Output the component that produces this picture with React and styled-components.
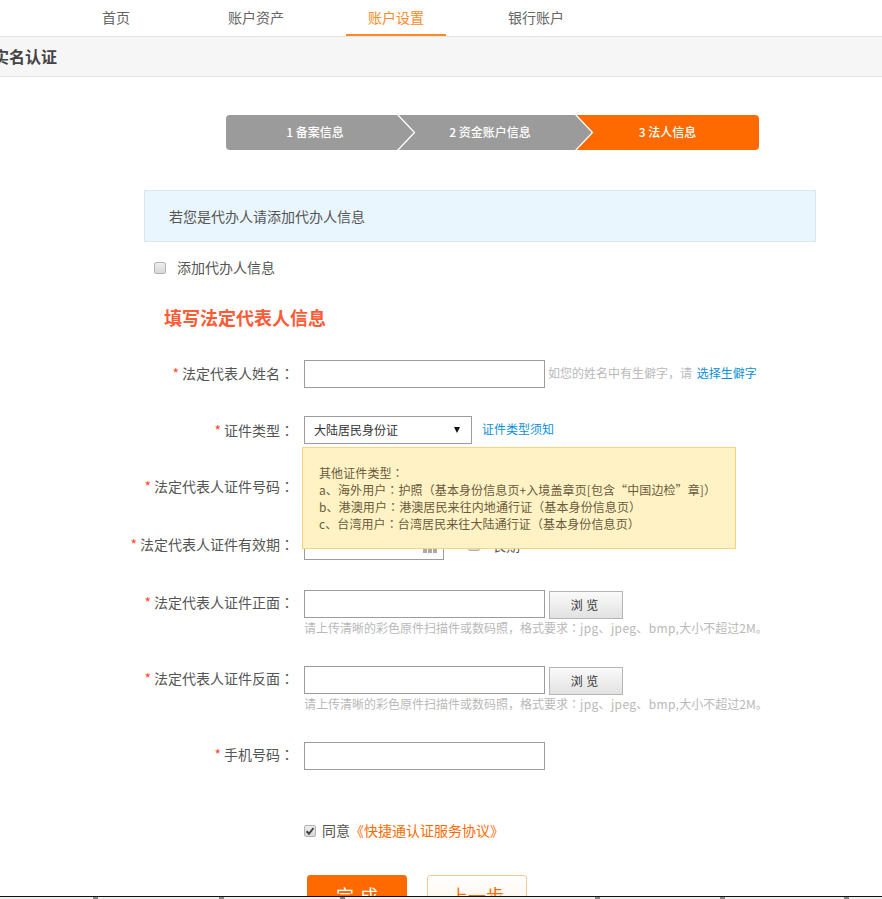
import React from 'react';
import styled, { createGlobalStyle } from 'styled-components';

const FONT = '"Noto Sans CJK SC", "Liberation Sans", sans-serif';

const Global = createGlobalStyle`
  html, body { margin: 0; padding: 0; background: #fff; }
  body { font-family: ${FONT}; font-size: 14px; color: #555; }
  * { box-sizing: border-box; }
`;

const Page = styled.div`
  position: relative;
  width: 882px;
  height: 899px;
  overflow: hidden;
`;

const Nav = styled.nav`
  display: flex;
  gap: 40px;
  height: 36px;
  padding-left: 66px;
`;

const NavItem = styled.a`
  width: 100px;
  height: 36px;
  line-height: 34px;
  text-align: center;
  font-size: 14px;
  color: ${p => (p.$active ? '#ff8a1f' : '#666')};
  border-bottom: 2px solid ${p => (p.$active ? '#ff8a1f' : 'transparent')};
`;

const Header = styled.header`
  height: 41px;
  background: #f6f6f6;
  border-top: 1px solid #e4e4e4;
  border-bottom: 1px solid #e4e4e4;
  line-height: 39px;
  font-size: 16px;
  font-weight: bold;
  color: #444;
`;

const HeaderTitle = styled.h1`
  margin: 0 0 0 -7px;
  font: inherit;
`;

const Steps = styled.ol`
  display: flex;
  list-style: none;
  width: 533px;
  height: 35px;
  margin: 38px 0 0 226px;
  padding: 0;
  border-radius: 4px;
  overflow: hidden;
`;

const Step = styled.li`
  position: relative;
  width: ${p => p.$w}px;
  text-align: center;
  line-height: 33px;
  font-size: 12px;
  font-weight: 500;
  color: #fff;
  padding-left: ${p => (p.$current ? 0 : 6)}px;
  background: ${p => (p.$current ? '#ff6a00' : '#9b9b9b')};
`;

const Chevron = styled.svg`
  position: absolute;
  top: 0;
  right: -18px;
  width: 20px;
  height: 35px;
  z-index: 1;
`;

const Notice = styled.div`
  width: 672px;
  height: 52px;
  margin: 40px 0 0 144px;
  padding-left: 24px;
  line-height: 51px;
  font-size: 14px;
  color: #555;
  background: #e9f6fe;
  border: 1px solid #dde6ec;
`;

const Box = styled.span`
  flex: none;
  display: inline-flex;
  align-items: center;
  justify-content: center;
  width: 12px;
  height: 12px;
  margin-top: ${p => p.$drop || 0}px;
  border: 1px solid #b2b2b2;
  border-radius: 2px;
  background: linear-gradient(#eee, #d8d8d8);
`;

const AgentRow = styled.label`
  display: flex;
  align-items: center;
  gap: 11px;
  margin: 16px 0 0 154px;
  height: 18px;
  font-size: 14px;
  color: #555;
`;

const SectionTitle = styled.h2`
  margin: 28px 0 0 164px;
  height: 27px;
  line-height: 27px;
  font-size: 18px;
  font-weight: bold;
  color: #ff5a36;
`;

const Form = styled.div`
  position: relative;
  display: flex;
  flex-direction: column;
  margin-top: 29px;
`;

const Row = styled.div`
  display: grid;
  grid-template-columns: 294px 1fr;
  column-gap: 10px;
  height: ${p => p.$h}px;
`;

const Label = styled.label`
  height: 28px;
  padding-top: ${p => p.$drop || 0}px;
  line-height: 25px;
  text-align: right;
  font-size: 14px;
  color: #555;
  white-space: nowrap;
`;

const Star = styled.span`
  color: #ff4a2a;
  margin-right: 3px;
`;

const Punct = styled.span`
  font-family: "Noto Sans CJK TC", sans-serif;
`;

const Field = styled.div`
  display: flex;
  align-items: flex-start;
  flex-wrap: wrap;
  align-content: flex-start;
`;

const Input = styled.div`
  position: relative;
  flex: none;
  width: ${p => p.$w || 241}px;
  height: 28px;
  border: 1px solid #9c9c9c;
  background: #fff;
`;

const Select = styled(Input)`
  display: flex;
  align-items: center;
  justify-content: space-between;
  padding: 0 11px 2px 9px;
  font-size: 12px;
  color: #333;
`;

const Caret = styled.i`
  width: 0;
  height: 0;
  margin-top: 2px;
  border-left: 3.5px solid transparent;
  border-right: 3.5px solid transparent;
  border-top: 6px solid #111;
`;

const Hint = styled.span`
  margin: 4px 0 0 3px;
  font-size: 12px;
  color: #b9b9b9;
  white-space: nowrap;
`;

const Link = styled.a`
  margin-left: 2px;
  color: #0a8fdc;
  font-size: 12px;
`;

const TypeLink = styled(Link)`
  margin: 4px 0 0 10px;
`;

const UploadHint = styled.span`
  flex-basis: 100%;
  height: 17px;
  line-height: 17px;
  font-size: 12px;
  color: #b9b9b9;
  white-space: nowrap;
`;

const Latin = styled.span`
  letter-spacing: 0.35px;
`;

const Browse = styled.button`
  width: 74px;
  height: 28px;
  margin: 1px 0 0 4px;
  padding: 0 3px 2px 0;
  border: 1px solid #b5b5b5;
  background: linear-gradient(#fafafa, #e2e2e2);
  font: 12px ${FONT};
  word-spacing: 1px;
  color: #333;
`;

const LongTerm = styled.span`
  display: flex;
  align-items: center;
  gap: 12px;
  height: 26px;
  margin-left: 24px;
  font-size: 14px;
  color: #555;
`;

const CalendarDots = styled.svg`
  position: absolute;
  right: 6px;
  bottom: 6px;
  width: 14px;
  height: 4px;
`;

const Tip = styled.div`
  position: absolute;
  left: 302px;
  top: 87px;
  width: 434px;
  height: 102px;
  padding: 16px 16px 0;
  font-size: 12px;
  line-height: 17px;
  letter-spacing: 0.1px;
  color: #6a5a3c;
  background: #fff3c6;
  border: 1px solid #f8d27c;
  white-space: nowrap;
`;

const Agree = styled.div`
  display: flex;
  align-items: center;
  gap: 6px;
  height: 20px;
  margin: 50px 0 0 304px;
  font-size: 14px;
  color: #555;
`;

const AgreeText = styled.span`
  color: #ff6a00;
  margin-left: -6px;
`;

const Actions = styled.div`
  display: flex;
  gap: 20px;
  margin: 35px 0 0 307px;
`;

const ActionButton = styled.button`
  width: 100px;
  height: 40px;
  padding: 0;
  border-radius: 3px;
  font: 18px ${FONT};
  word-spacing: ${p => (p.$primary ? '2px' : '0')};
  color: ${p => (p.$primary ? '#fff' : '#ff6a00')};
  border: 1px solid ${p => (p.$primary ? '#ff6a00' : '#ffc794')};
  background: ${p => (p.$primary ? '#ff6a00' : 'linear-gradient(#fff, #fff1e4)')};
`;

const WindowEdge = styled.div`
  position: absolute;
  left: 0;
  right: 0;
  bottom: 0;
  height: 3px;
  background: #eee;
  border-top: 1px solid #111;
`;

const EdgeTicks = styled.svg`
  display: block;
  width: 882px;
  height: 2px;
`;

const TICKS = [93, 219, 340, 595, 720, 844];

const ChevronLine = () => (
  <Chevron viewBox="0 0 20 35">
    <path d="M1 -1 L18.5 17.5 L1 36 Z" fill="#9b9b9b" />
    <path d="M1 -1 L18.5 17.5 L1 36" fill="none" stroke="#fff" strokeWidth="1.3" />
  </Chevron>
);

const Req = ({ children, drop }) => (
  <Label $drop={drop}><Star>*</Star>{children}<Punct>：</Punct></Label>
);

const UploadNote = () => (
  <UploadHint>
    请上传清晰的彩色原件扫描件或数码照，格式要求<Punct>：</Punct><Latin>jpg、jpeg、bmp,</Latin>大小不超过2M。
  </UploadHint>
);

export default function App() {
  return (
    <Page>
      <Global />
      <Nav>
        <NavItem>首页</NavItem>
        <NavItem>账户资产</NavItem>
        <NavItem $active>账户设置</NavItem>
        <NavItem>银行账户</NavItem>
      </Nav>
      <Header><HeaderTitle>实名认证</HeaderTitle></Header>
      <Steps>
        <Step $w={172}>1 备案信息<ChevronLine /></Step>
        <Step $w={178}>2 资金账户信息<ChevronLine /></Step>
        <Step $w={183} $current>3 法人信息</Step>
      </Steps>
      <Notice>若您是代办人请添加代办人信息</Notice>
      <AgentRow><Box $drop={2} />添加代办人信息</AgentRow>
      <SectionTitle>填写法定代表人信息</SectionTitle>
      <Form>
        <Row $h={56}>
          <Req drop={1}>法定代表人姓名</Req>
          <Field>
            <Input />
            <Hint>如您的姓名中有生僻字，请 <Link>选择生僻字</Link></Hint>
          </Field>
        </Row>
        <Row $h={58}>
          <Req drop={2}>证件类型</Req>
          <Field>
            <Select $w={168}>大陆居民身份证<Caret /></Select>
            <TypeLink>证件类型须知</TypeLink>
          </Field>
        </Row>
        <Row $h={58}>
          <Req>法定代表人证件号码</Req>
          <Field><Input /></Field>
        </Row>
        <Row $h={58}>
          <Req>法定代表人证件有效期</Req>
          <Field>
            <Input $w={140}>
              <CalendarDots viewBox="0 0 14 4">
                <g fill="#aaa">
                  <rect x="0" y="0" width="4" height="4" />
                  <rect x="5" y="0" width="4" height="4" />
                  <rect x="10" y="0" width="4" height="4" />
                </g>
              </CalendarDots>
            </Input>
            <LongTerm><Box />长期</LongTerm>
          </Field>
        </Row>
        <Row $h={76}>
          <Req>法定代表人证件正面</Req>
          <Field>
            <Input />
            <Browse>浏 览</Browse>
            <UploadNote />
          </Field>
        </Row>
        <Row $h={76}>
          <Req>法定代表人证件反面</Req>
          <Field>
            <Input />
            <Browse>浏 览</Browse>
            <UploadNote />
          </Field>
        </Row>
        <Row $h={28}>
          <Req>手机号码</Req>
          <Field><Input /></Field>
        </Row>
        <Tip>
          其他证件类型<Punct>：</Punct><br />
          a、海外用户<Punct>：</Punct>护照<Punct>（</Punct>基本身份信息页+入境盖章页[包含“中国边检”章]<Punct>）</Punct><br />
          b、港澳用户<Punct>：</Punct>港澳居民来往内地通行证<Punct>（</Punct>基本身份信息页<Punct>）</Punct><br />
          c、台湾用户<Punct>：</Punct>台湾居民来往大陆通行证<Punct>（</Punct>基本身份信息页<Punct>）</Punct>
        </Tip>
      </Form>
      <Agree>
        <Box $drop={2}>
          <svg width="10" height="10" viewBox="0 0 10 10">
            <path d="M1.5 5.2 L4 7.8 L8.5 2" fill="none" stroke="#444" strokeWidth="2" />
          </svg>
        </Box>
        同意<AgreeText>《快捷通认证服务协议》</AgreeText>
      </Agree>
      <Actions>
        <ActionButton $primary>完 成</ActionButton>
        <ActionButton>上一步</ActionButton>
      </Actions>
      <WindowEdge>
        <EdgeTicks viewBox="0 0 882 2">
          {TICKS.map(x => <rect key={x} x={x} y="0" width="5" height="2" fill="#888" />)}
        </EdgeTicks>
      </WindowEdge>
    </Page>
  );
}
